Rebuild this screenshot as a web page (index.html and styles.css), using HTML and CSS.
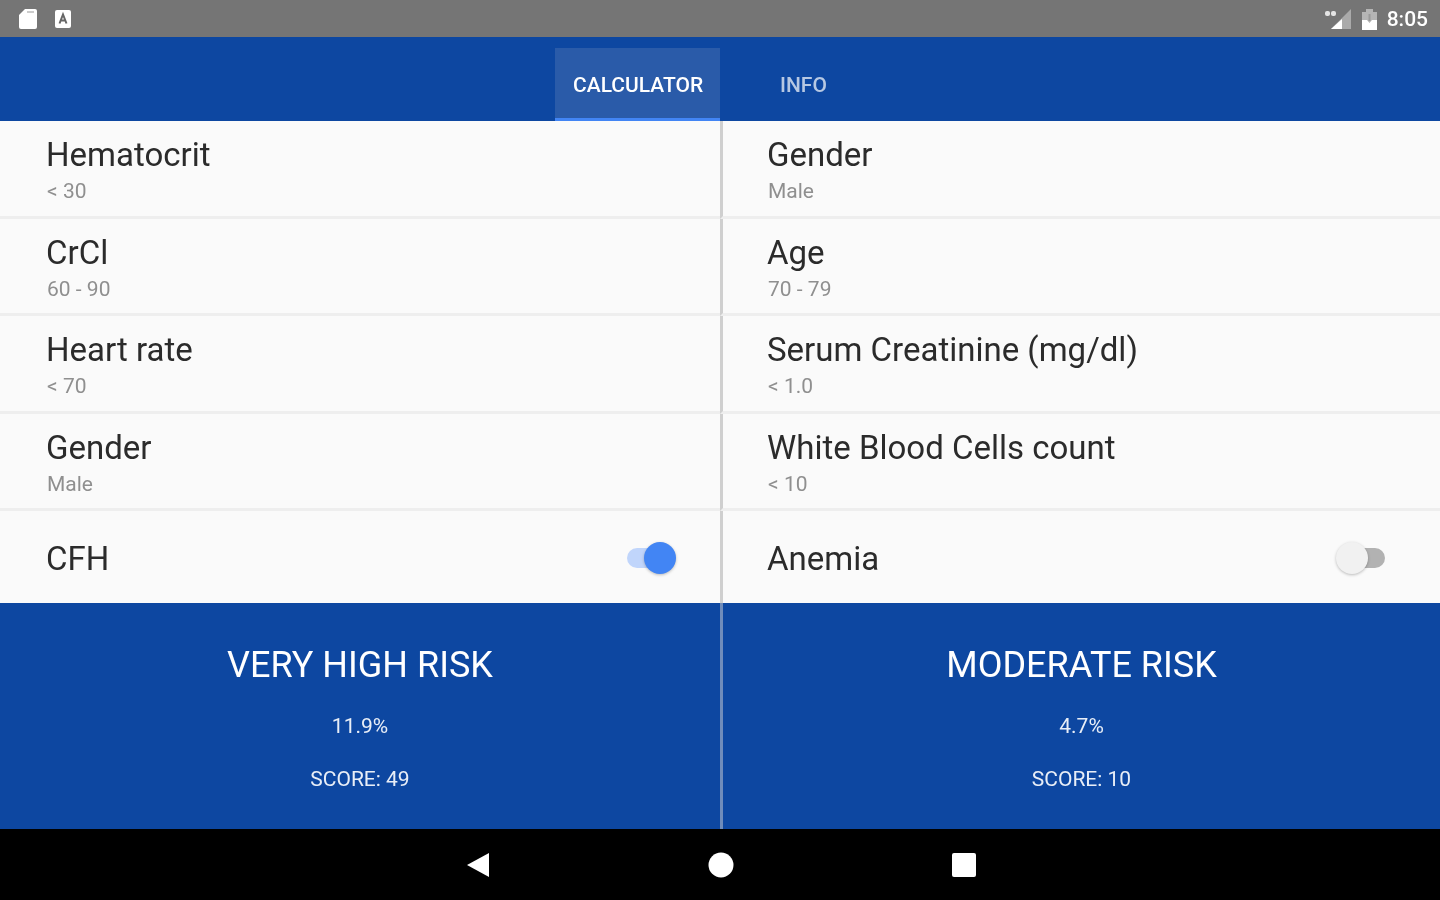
FILE: index.html
```html
<!DOCTYPE html>
<html lang="en">

<head>
  <meta charset="UTF-8">
  <title>Risk Calculator</title>
  <link rel="stylesheet" href="styles.css">
</head>

<body>
  <div class="statusBar">
    <div class="statusLeft">
      <svg class="icon" width="20" height="22" viewBox="0 0 20 22"><path d="M7 1h10a2 2 0 0 1 2 2v16a2 2 0 0 1-2 2H3a2 2 0 0 1-2-2V7z" fill="#fff"/><path d="M9 4h7" stroke="#bbb" stroke-width="1.5"/></svg>
      <svg class="icon" width="18" height="20" viewBox="0 0 18 20"><rect x="1" y="1" width="16" height="18" rx="2" fill="#fff"/><path d="M5.5 14.500L9 5.500l3.500 9M7 11.500h4" fill="none" stroke="#666" stroke-width="2"/></svg>
    </div>
    <div class="statusRight">
      <svg class="icon" width="28" height="24" viewBox="0 0 28 24"><path d="M27 2v20H7z" fill="#aaa"/><path d="M18 12v10H7z" fill="#fff"/><rect x="1" y="4" width="5" height="5" rx="2" fill="#e4e4e4"/><rect x="7" y="4" width="5" height="5" rx="2" fill="#e4e4e4"/></svg>
      <svg class="icon" width="17" height="24" viewBox="0 0 17 24"><path d="M5 2h7v3h4v18H1V5h4z" fill="#b5b5b5"/><path d="M1 13h5l2.500 3 2.500-3h5v10H1z" fill="#fff"/><path d="M8.500 7v7" stroke="#999" stroke-width="2"/></svg>
      <span class="clock">8:05</span>
    </div>
  </div>

  <header class="tabBar">
    <div class="tab active">CALCULATOR</div>
    <div class="tab">INFO</div>
  </header>

  <main class="columns">
    <section class="column">
      <div class="row"><div class="rowTitle">Hematocrit</div><div class="rowValue">&lt; 30</div></div>
      <div class="row"><div class="rowTitle">CrCl</div><div class="rowValue">60 - 90</div></div>
      <div class="row"><div class="rowTitle">Heart rate</div><div class="rowValue">&lt; 70</div></div>
      <div class="row"><div class="rowTitle">Gender</div><div class="rowValue">Male</div></div>
      <div class="row switchRow">
        <div class="rowTitle">CFH</div>
        <div class="switch on"><div class="track"></div><div class="thumb"></div></div>
      </div>
      <div class="result">
        <div class="riskLabel">VERY HIGH RISK</div>
        <div class="riskText">11.9%</div>
        <div class="riskText">SCORE: 49</div>
      </div>
    </section>

    <section class="column">
      <div class="row"><div class="rowTitle">Gender</div><div class="rowValue">Male</div></div>
      <div class="row"><div class="rowTitle">Age</div><div class="rowValue">70 - 79</div></div>
      <div class="row"><div class="rowTitle">Serum Creatinine (mg/dl)</div><div class="rowValue">&lt; 1.0</div></div>
      <div class="row"><div class="rowTitle">White Blood Cells count</div><div class="rowValue">&lt; 10</div></div>
      <div class="row switchRow">
        <div class="rowTitle">Anemia</div>
        <div class="switch"><div class="track"></div><div class="thumb"></div></div>
      </div>
      <div class="result">
        <div class="riskLabel">MODERATE RISK</div>
        <div class="riskText">4.7%</div>
        <div class="riskText">SCORE: 10</div>
      </div>
    </section>
  </main>

  <nav class="navBar">
    <svg width="24" height="26" viewBox="0 0 24 26"><path d="M23 1v24L1 13z" fill="#fff"/></svg>
    <svg width="26" height="26" viewBox="0 0 26 26"><circle cx="13" cy="13" r="12.500" fill="#fff"/></svg>
    <svg width="24" height="24" viewBox="0 0 24 24"><rect width="24" height="24" rx="2" fill="#fff"/></svg>
  </nav>
</body>

</html>
```

FILE: styles.css
```css
html, body {
  margin: 0;
  height: 100%;
  background-color: #000;
}

body {
  width: 1440px;
  height: 900px;
  overflow: hidden;
  display: flex;
  flex-direction: column;
  font-family: Roboto, "Liberation Sans", sans-serif;
  background-color: #fafafa;
  filter: blur(0.6px);
}

.statusBar {
  height: 37px;
  flex: none;
  box-sizing: border-box;
  padding: 0 12px 0 18px;
  display: flex;
  justify-content: space-between;
  align-items: center;
  background-color: #757575;
}

.statusLeft {
  display: flex;
  align-items: center;
  gap: 16px;
}

.statusRight {
  display: flex;
  align-items: center;
  gap: 9px;
}

.clock {
  color: #fff;
  font-size: 21px;
  font-weight: 500;
}

.icon {
  display: block;
}

.tabBar {
  height: 84px;
  flex: none;
  box-sizing: border-box;
  padding-top: 11px;
  padding-left: 555px;
  display: flex;
  background-color: #0d47a1;
}

.tab {
  height: 73px;
  box-sizing: border-box;
  padding: 25px 18px 0;
  color: rgba(255, 255, 255, 0.7);
  font-size: 21px;
  font-weight: 500;
}

.tab.active {
  margin-right: 42px;
  width: 165px;
  color: #fff;
  background-color: #2a5ba9;
  border-bottom: 3px solid #4285f4;
}

.columns {
  flex: 1;
  display: flex;
}

.column {
  width: 720px;
  box-sizing: border-box;
  display: flex;
  flex-direction: column;
}

.row {
  height: 97.500px;
  box-sizing: border-box;
  padding: 15px 47px 0;
  border-bottom: 3px solid #eeeeee;
}

.column + .column .row {
  padding-left: 45px;
  border-left: 3px solid #cfcfcf;
}

.rowTitle {
  margin-left: -1px;
  color: #2b2b2b;
  font-size: 33px;
  line-height: 38px;
}

.rowValue {
  margin-top: 3px;
  color: #8f8f8f;
  font-size: 21px;
  line-height: 28px;
}

.switchRow {
  height: 92px;
  padding-top: 29px;
  padding-right: 44px;
  border-bottom: none;
  display: flex;
  justify-content: space-between;
}

.column + .column .switchRow {
  padding-right: 54px;
}

.switch {
  position: relative;
  width: 50px;
  height: 32px;
  margin-top: 2px;
}

.track {
  position: absolute;
  left: 1px;
  top: 6px;
  width: 48px;
  height: 20px;
  border-radius: 10px;
  background-color: #b2b2b2;
}

.thumb {
  position: absolute;
  top: 0;
  left: 0;
  width: 32px;
  height: 32px;
  border-radius: 50%;
  background-color: #f1f1f1;
  box-shadow: 0 1px 3px rgba(0, 0, 0, 0.25);
}

.switch.on .track {
  background-color: #c0d5fb;
}

.switch.on .thumb {
  left: auto;
  right: 0;
  background-color: #4285f4;
}

.result {
  flex: 1;
  padding-top: 41px;
  box-sizing: border-box;
  text-align: center;
  color: #fff;
  background-color: #0d47a1;
}

.column + .column .result {
  border-left: 3px solid #6f8cbb;
}

.riskLabel {
  font-size: 36px;
  line-height: 42px;
  margin-bottom: 26px;
}

.riskText {
  font-size: 21px;
  line-height: 28px;
  margin-bottom: 25px;
  color: #e8eef7;
}

.navBar {
  height: 71px;
  flex: none;
  padding-left: 466px;
  padding-right: 464px;
  display: flex;
  justify-content: space-between;
  align-items: center;
  background-color: #000;
}
```
